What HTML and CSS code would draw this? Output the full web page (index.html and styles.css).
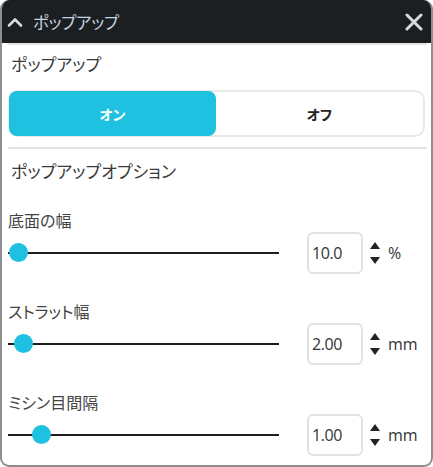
FILE: index.html
```html
<!DOCTYPE html>
<html lang="ja">
<head>
<meta charset="utf-8">
<title>ポップアップ</title>
<link rel="stylesheet" href="styles.css">
</head>
<body>
<div class="window">
  <div class="header">
    <svg class="chevron" width="16" height="10" viewBox="0 0 16 10"><path d="M2 8.5 L8 2.5 L14 8.5" fill="none" stroke="#d6d9dc" stroke-width="2.6" stroke-linecap="round" stroke-linejoin="round"/></svg>
    <span class="title">ポップアップ</span>
    <svg class="close" width="18" height="18" viewBox="0 0 18 18"><path d="M2 2 L16 16 M16 2 L2 16" fill="none" stroke="#d9dadb" stroke-width="3" stroke-linecap="round"/></svg>
  </div>
  <div class="content">
    <div class="rule"></div>
    <div class="section-title">ポップアップ</div>
    <div class="segmented">
      <div class="seg active">オン</div>
      <div class="seg">オフ</div>
    </div>
    <div class="rule rule-2"></div>
    <div class="section-title section-title-2">ポップアップオプション</div>

    <div class="label">底面の幅</div>
    <div class="row">
      <div class="slider"><div class="track"></div><div class="thumb" style="left:1px"></div></div>
      <div class="input">10.0</div>
      <div class="spin"><span class="up"></span><span class="down"></span></div>
      <div class="unit">%</div>
    </div>

    <div class="label">ストラット幅</div>
    <div class="row">
      <div class="slider"><div class="track"></div><div class="thumb" style="left:6px"></div></div>
      <div class="input">2.00</div>
      <div class="spin"><span class="up"></span><span class="down"></span></div>
      <div class="unit">mm</div>
    </div>

    <div class="label">ミシン目間隔</div>
    <div class="row">
      <div class="slider"><div class="track"></div><div class="thumb" style="left:24px"></div></div>
      <div class="input">1.00</div>
      <div class="spin"><span class="up"></span><span class="down"></span></div>
      <div class="unit">mm</div>
    </div>
  </div>
</div>
</body>
</html>
```

FILE: styles.css
```css
* { box-sizing: border-box; }
html, body { margin: 0; padding: 0; background: #ffffff; }
body {
  font-family: "Noto Sans CJK JP", "Noto Sans", sans-serif;
  font-feature-settings: "palt";
  color: #333;
}
.window {
  width: 433px;
  height: 467px;
  border: 2px solid #8e8e8e;
  border-top: 0;
  border-radius: 9px;
  overflow: hidden;
  display: flex;
  flex-direction: column;
  background: #fff;
}
.header {
  height: 43px;
  flex: none;
  background: #1c1f21;
  display: flex;
  align-items: center;
  padding-left: 5px;
  padding-right: 8px;
}
.chevron { display: block; margin-top: 1px; }
.title {
  margin-left: 10px;
  font-size: 16.5px;
  line-height: 20px;
  color: #c8d5e1;
  letter-spacing: -0.3px;
}
.close { margin-left: auto; display: block; }
.content {
  padding: 0 4px 0 6px;
  display: flex;
  flex-direction: column;
}
.rule { height: 2px; background: #e3e3e3; flex: none; }
.rule-2 { margin-top: 10px; }
.section-title {
  margin-top: 7px;
  padding-left: 3px;
  font-size: 17px;
  line-height: 24px;
  color: #3a3a3a;
}
.section-title-2 { margin-top: 10px; }
.segmented {
  margin-top: 14px;
  margin-right: 2px;
  height: 47px;
  border: 2px solid #e9e9e9;
  border-radius: 10px;
  display: flex;
  padding: 0;
}
.seg {
  flex: 1;
  display: flex;
  align-items: center;
  justify-content: center;
  font-size: 14px;
  font-weight: 700;
  color: #222;
}
.seg.active {
  background: #1ec1df;
  color: #fff;
  border-radius: 8px;
  margin: -1px 0 -1px -1px;
}
.label {
  margin-top: 26px;
  font-size: 16px;
  line-height: 23px;
  color: #444;
}
.row {
  height: 42px;
  display: flex;
  align-items: center;
}
.slider {
  position: relative;
  width: 271px;
  height: 42px;
  display: flex;
  align-items: center;
}
.track { width: 100%; height: 2px; background: #1d1d1d; }
.thumb {
  position: absolute;
  top: 11px;
  width: 19px;
  height: 19px;
  border-radius: 50%;
  background: #1ec1df;
}
.input {
  margin-left: 28px;
  width: 56px;
  height: 42px;
  border: 2px solid #e2e2e2;
  border-radius: 6px;
  padding-left: 3px;
  display: flex;
  align-items: center;
  font-family: "Open Sans", "Noto Sans", sans-serif;
  font-size: 16px;
  color: #333;
  letter-spacing: -0.4px;
}
.spin {
  margin-left: 7px;
  display: flex;
  flex-direction: column;
  gap: 8px;
}
.up, .down { display: block; width: 0; height: 0; border-left: 5px solid transparent; border-right: 5px solid transparent; }
.up { border-bottom: 7px solid #222; }
.down { border-top: 7px solid #222; }
.unit {
  margin-left: 8px;
  font-family: "Open Sans", "Noto Sans", sans-serif;
  font-size: 16px;
  color: #333;
}
```
